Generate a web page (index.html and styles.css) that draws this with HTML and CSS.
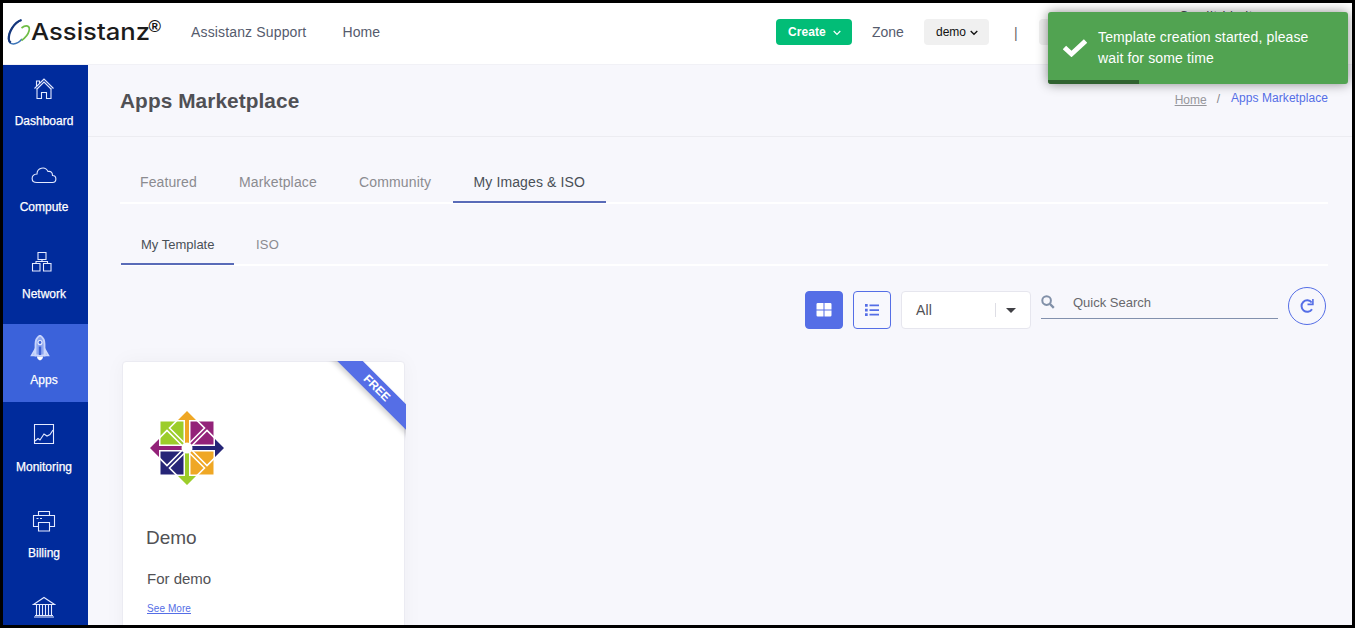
FILE: index.html
```html
<!DOCTYPE html>
<html lang="en">
<head>
<meta charset="utf-8">
<title>Apps Marketplace</title>
<link rel="stylesheet" href="styles.css">
</head>
<body>
<div class="screen">
  <header class="topbar">
    <svg class="logo" width="160" height="40" viewBox="0 0 160 40">
      <path d="M18.500 6C11 8.500 5 19 5.500 25c.5 6.500 8 6.500 13.500 0" fill="none" stroke="#3b74b8" stroke-width="1.500"/>
      <path d="M18.500 6C11 8.500 5.500 18 5.800 25q.2 2.500 2 3.700" fill="none" stroke="#16377c" stroke-width="2.200"/>
      <path d="M18.500 14c4.500-3.500 9-2.500 7.500 3-1 4-4 7-7.500 9.500" fill="none" stroke="#6fbd45" stroke-width="1.700"/>
      <text x="28" y="26" textLength="119" lengthAdjust="spacingAndGlyphs" class="logo-name">Assistanz</text>
      <text x="145.500" y="17.500" textLength="12.500" lengthAdjust="spacingAndGlyphs" class="logo-mark">®</text>
    </svg>
    <a class="toplink support">Assistanz Support</a>
    <a class="toplink home">Home</a>
    <div class="actions">
      <button class="btn create">Create<svg width="8" height="6" viewBox="0 0 8 6"><path d="M.7 1L4 4.300 7.300 1" fill="none" stroke="currentColor" stroke-width="1.200"/></svg></button>
      <span class="toplink zone">Zone</span>
      <button class="btn pick">demo<svg width="8" height="6" viewBox="0 0 8 6"><path d="M.7 1L4 4.300 7.300 1" fill="none" stroke="currentColor" stroke-width="1.300"/></svg></button>
      <span class="bar">|</span>
      <button class="btn account"></button>
      <span class="credit">Credit Limit</span>
    </div>
  </header>
  <div class="body">
    <nav class="side">
      <a class="item"><svg width="24" height="24" viewBox="0 0 24 24"><path d="M2.500 12.500L12 3l9.500 9.500M4.500 13.500L12 6l7.500 7.500M5 12v10.500h4.500v-6h5v6H19V12M4.500 10V5h3v2"/></svg><span>Dashboard</span></a>
      <a class="item"><svg width="26" height="24" viewBox="0 0 26 24"><path d="M6 19.500c-6.500 0-6.500-8 0-8.500 0-6 8-8.500 11-2.500 3-.5 4.500 1 4.500 4 4.500 0 4.500 7 0 7z"/></svg><span>Compute</span></a>
      <a class="item"><svg class="shift2" width="24" height="24" viewBox="0 0 24 24"><path d="M8 3.500h8v7H8zM2.500 14.500h7.500V22H2.500zM13.500 14.500H21V22h-7.500zM12 10.500v2M6 14.500v-2h11.500v2"/></svg><span>Network</span></a>
      <a class="item active"><svg class="shift4" width="24" height="26" viewBox="0 0 24 26"><path d="M12 .5C8.500 2.500 7.500 6 7.500 9v11.500h9V9c0-3-1-6.500-4.500-8.500z" fill="#8ea7f0" stroke="#c9d5fb" stroke-width="1.800"/><path d="M7 14.500L3.500 20.500H7zM17 14.500l3.500 6H17z" fill="#a9bcf5" stroke="#cbd7fb" stroke-width="1.500"/><circle cx="12" cy="7.500" r="2" fill="#3b62da" stroke="#e8edff"/><path d="M10.800 11.500h2.400v8.500h-2.400z" fill="#3f63d6" stroke="none"/><path d="M9 21.500h6c0 2-1 3-3 4-2-1-3-2-3-4z" fill="#fff" stroke="none"/></svg><span>Apps</span></a>
      <a class="item"><svg width="24" height="24" viewBox="0 0 24 24"><path d="M2.500 2.500h19v19h-19zM3 19l3-2.500 2 1.500 4-6 3 2 3-1.500L21 8"/></svg><span>Monitoring</span></a>
      <a class="item"><svg width="24" height="24" viewBox="0 0 24 24"><path d="M6.500 6.500v-4h11v4M6.500 17.500h-5v-11h21v11h-5M6.500 13.500h11v8.500h-11zM4.500 9.500h2M8 9.500h2"/></svg><span>Billing</span></a>
      <a class="item"><svg width="24" height="24" viewBox="0 0 24 24"><path d="M1.500 9.500L12 2.500l10.500 7zM3 20.500h18M2 22h20M4.500 9.500v11M7.500 9.500v11M10.500 9.500v11M13.500 9.500v11M16.500 9.500v11M19.500 9.500v11"/></svg></a>
    </nav>
    <main class="main">
      <div class="heading">
        <h1>Apps Marketplace</h1>
        <div class="crumbs"><a class="crumb-home">Home</a><span class="slash">/</span><a class="crumb-here">Apps Marketplace</a></div>
      </div>
      <div class="tabs">
        <a class="tab t1">Featured</a><a class="tab t2">Marketplace</a><a class="tab t3">Community</a><a class="tab t4 on">My Images &amp; ISO</a>
      </div>
      <div class="tabs sub">
        <a class="tab s1 on">My Template</a><a class="tab s2">ISO</a>
      </div>
      <div class="tools">
        <button class="view solid"><svg width="16" height="14" viewBox="0 0 16 14"><path d="M1.800 0H7.500V6.500H.5V1.300Q.5 0 1.800 0zM8.500 0h5.700q1.300 0 1.300 1.300v5.200h-7zM.5 7.500h7V13.500H1.800Q.5 13.500.5 12.200zM8.500 7.500h7v4.700q0 1.300-1.300 1.300H8.500z" fill="#fff"/></svg></button>
        <button class="view"><svg width="14" height="12" viewBox="0 0 14 12"><path d="M0 0h2.700v2.700H0zM0 4.700h2.700v2.700H0zM0 9.300h2.700V12H0zM4.500.5H14v1.700H4.500zM4.500 5.200H14v1.700H4.500zM4.500 9.800H14v1.700H4.500z" fill="#556ee6"/></svg></button>
        <div class="select"><span>All</span><i class="split"></i><i class="caret"></i></div>
        <div class="search"><svg width="14" height="14" viewBox="0 0 14 14"><circle cx="5.600" cy="5.600" r="4.300" fill="none" stroke="#8190a8" stroke-width="2"/><path d="M9 9l3.800 3.800" stroke="#8190a8" stroke-width="2.400"/></svg><span>Quick Search</span></div>
        <button class="refresh"><svg width="16" height="16" viewBox="0 0 16 16"><path d="M13 11.200A5.700 5.700 0 1 1 12.700 4.500" fill="none" stroke="#556ee6" stroke-width="2"/><path d="M14.700 1v6.200H8.500V5.600h4.600V1z" fill="#556ee6"/></svg></button>
      </div>
      <article class="card">
        <div class="ribbon-box"><span class="ribbon">FREE</span></div>
        <svg class="distro" width="76" height="76" viewBox="-38 -38 76 76">
          <path d="M-26.500-26.500H0V0h-26.500z" fill="#9ccd2a"/>
          <path d="M0-26.500h26.500V0H0z" fill="#932279"/>
          <path d="M-26.500 0H0v26.500h-26.500z" fill="#262577"/>
          <path d="M0 0h26.500v26.500H0z" fill="#efa724"/>
          <g id="arm"><path class="arm-gap" d="M-3.500-3v-25.500h7V-3"/><path class="arm-line" d="M-3-5.500L-17.500-20 0-37.500 17.500-20 3-5.500"/></g>
          <use href="#arm" transform="rotate(90)"/>
          <use href="#arm" transform="rotate(180)"/>
          <use href="#arm" transform="rotate(270)"/>
          <path d="M0-37L9-28H2V-5.500L0-3-2-5.500V-28h-7z" fill="#efa724"/>
          <path d="M0-37L9-28H2V-5.500L0-3-2-5.500V-28h-7z" fill="#262577" transform="rotate(90)"/>
          <path d="M0-37L9-28H2V-5.500L0-3-2-5.500V-28h-7z" fill="#9ccd2a" transform="rotate(180)"/>
          <path d="M0-37L9-28H2V-5.500L0-3-2-5.500V-28h-7z" fill="#932279" transform="rotate(270)"/>
          <circle r="5.500" fill="#fff"/>
        </svg>
        <h2>Demo</h2>
        <p>For demo</p>
        <a class="more">See More</a>
      </article>
    </main>
  </div>
</div>
<div class="toast">
  <svg width="24" height="18" viewBox="0 0 24 18"><path d="M1.500 8.500L8.500 15 22.500 2" fill="none" stroke="#fff" stroke-width="4.800"/></svg>
  <div class="toast-text">Template creation started, please<br>wait for some time</div>
  <i class="progress"></i>
</div>
</body>
</html>
```
FILE: styles.css
```css
* { box-sizing: border-box; }
body { margin: 0; font-family: "Liberation Sans", Arial, sans-serif; color: #495057; }
button { font-family: inherit; margin: 0; }
h1, h2, p { margin: 0; font-weight: 400; }
.screen { width: 1355px; height: 628px; border: 3px solid #000; overflow: hidden; display: flex; flex-direction: column; background: #f7f7fc; }
.topbar { height: 62px; flex: none; background: #fff; display: flex; align-items: flex-start; border-bottom: 1px solid #f1f1f6; white-space: nowrap; }
.logo { margin: 11px 0 0 0; flex: none; }
.logo-name { font: 500 23.5px Inter, sans-serif; fill: #1c1c1c; }
.logo-mark { font: 700 17px "Liberation Sans", sans-serif; fill: #151515; }
.toplink { font-size: 14px; line-height: 20px; color: #555b6d; margin-top: 19px; flex: none; }
.support { margin-left: 28px; width: 151px; letter-spacing: .15px; }
.home { width: 60px; letter-spacing: .1px; padding-left: .5px; }
.actions { display: flex; align-items: flex-start; margin-left: 374px; }
.btn { border: 0; border-radius: 4px; height: 26px; margin-top: 16px; flex: none; display: flex; align-items: center; font-size: 12px; }
.create { width: 76px; background: #02bd77; color: #fff; font-weight: 700; padding: 0 0 0 12px; gap: 7px; letter-spacing: .05px; }
.create svg, .pick svg { margin-top: 2px; }
.zone { margin-left: 20px; width: 52px; }
.pick { width: 65px; background: #f0f0f0; color: #111; padding: 0 0 0 12px; gap: 4px; }
.bar { margin: 20px 0 0 25px; width: 25px; font-size: 14px; line-height: 20px; color: #666; }
.account { width: 110px; background: #f0f0f0; }
.credit { font-size: 13px; line-height: 16px; margin: 5px 0 0 30px; letter-spacing: .7px; }
.body { flex: 1; min-height: 0; display: flex; }
.side { width: 85px; flex: none; background: #002b9c; display: flex; flex-direction: column; gap: 8.5px; overflow: hidden; }
.side .item:first-child { margin-top: -1px; }
.item { height: 78px; flex: none; display: flex; flex-direction: column; align-items: center; padding: 11px 3px 0 0; color: #fff; font-size: 12px; }
.item svg { height: 26px; fill: none; stroke: #e4eaff; stroke-width: 1.1; flex: none; }
.item span { line-height: 16px; margin-top: 11.6px; -webkit-text-stroke: .25px #fff; }
.active { background: #3b62da; }
.active span { margin-top: 11px; }
.shift2 { margin-left: -5px; }
.shift4 { margin-left: -8px; }
.main { flex: 1; min-width: 0; overflow: hidden; }
.heading { height: 72px; border-bottom: 1px solid #ececf1; display: flex; justify-content: space-between; padding: 0 24px 0 32px; }
h1 { font-size: 20.8px; font-weight: 700; line-height: 24px; margin-top: 24px; letter-spacing: .08px; color: #505055; }
.crumbs { display: flex; font-size: 12px; line-height: 16px; padding-top: 25px; }
.crumb-home { text-decoration: underline; color: #96969b; margin-top: 2px; }
.slash { margin: 1px 11px 0 10px; color: #85858a; }
.crumb-here { color: #556ee6; letter-spacing: .06px; }
.tabs { display: flex; height: 45px; margin: 22px 24px 0 32px; border-bottom: 2px solid #fff; font-size: 14px; line-height: 20px; color: #8b8b90; }
.tab { height: 43px; padding: 13px 0 0 20px; white-space: nowrap; flex: none; }
.on { height: 44px; color: #495057; border-bottom: 2px solid #596bb8; }
.t1 { width: 99px; letter-spacing: .1px; }
.t2 { width: 120px; letter-spacing: .15px; }
.t3 { width: 114px; letter-spacing: .15px; }
.t4 { width: 153px; letter-spacing: .12px; padding-left: 20.5px; }
.sub { margin: 17px 24px 0 33px; font-size: 13px; }
.sub .tab { padding-top: 14px; }
.s1 { width: 113px; }
.s2 { margin-left: 2px; letter-spacing: .2px; }
.tools { display: flex; align-items: flex-start; justify-content: flex-end; margin-top: 21px; padding-right: 26px; }
.view { width: 38px; height: 38px; margin: 4px 10px 0 0; padding: 0; border: 1px solid #556ee6; border-radius: 4px; background: #f8f8fd; display: flex; align-items: center; justify-content: center; }
.solid { background: #556ee6; }
.select { width: 130px; height: 38px; margin: 4px 10px 0 0; background: #fff; border: 1px solid #e6e6ee; border-radius: 4px; display: flex; align-items: center; font-size: 14px; color: #515156; padding-left: 14px; }
.select span { width: 79px; letter-spacing: .2px; }
.split { width: 1px; height: 14px; background: #dedee5; margin-right: 10px; }
.caret { border: 5px solid transparent; border-top-color: #404045; border-bottom: 0; }
.search { width: 237px; height: 32px; border-bottom: 1px solid #8290ad; margin-right: 10px; display: flex; align-items: flex-start; font-size: 13px; line-height: 16px; color: #68686d; padding-top: 8px; }
.search span { margin-left: 18px; }
.refresh { width: 38px; height: 38px; border: 1px solid #556ee6; border-radius: 50%; background: transparent; padding: 0; display: flex; align-items: center; justify-content: center; }
.card { position: relative; width: 283px; height: 330px; margin: 32px 0 0 34px; background: #fff; border: 1px solid #ebebf2; border-radius: 4px; box-shadow: 0 0 20px rgba(18, 38, 63, .04); padding: 48px 0 0 23px; }
.distro { display: block; margin-left: 3px; }
.arm-gap { fill: #fff; }
.arm-line { fill: none; stroke: #fff; stroke-width: 1.6; }
h2 { font-size: 19px; line-height: 24px; margin-top: 40px; color: #515155; }
.card p { font-size: 15px; line-height: 20px; margin: 19px 0 0 1px; color: #515155; }
.more { display: block; font-size: 10px; line-height: 12px; margin: 14px 0 0 1px; color: #556ee6; text-decoration: underline; letter-spacing: .08px; }
.ribbon-box { position: absolute; top: -1px; right: -2px; width: 90px; height: 90px; overflow: hidden; }
.ribbon { position: absolute; top: 18px; left: -2px; width: 126px; height: 18px; line-height: 18px; background: #556ee6; color: #fff; font-size: 12px; font-weight: 700; text-align: center; transform: rotate(45deg); box-shadow: 0 3px 5px rgba(0, 0, 0, .18); }
.toast { position: absolute; left: 1048px; top: 12px; width: 300px; height: 72px; border-radius: 3px; background: #51a351; box-shadow: 0 0 12px rgba(0, 0, 0, .45); color: #fff; display: flex; align-items: flex-start; padding: 15px 0 0 15px; overflow: hidden; }
.toast svg { margin-top: 12px; }
.toast-text { font-size: 14px; line-height: 21px; margin-left: 11px; white-space: nowrap; letter-spacing: .13px; }
.progress { position: absolute; left: 0; bottom: 0; width: 91px; height: 4px; background: #306230; }
```
